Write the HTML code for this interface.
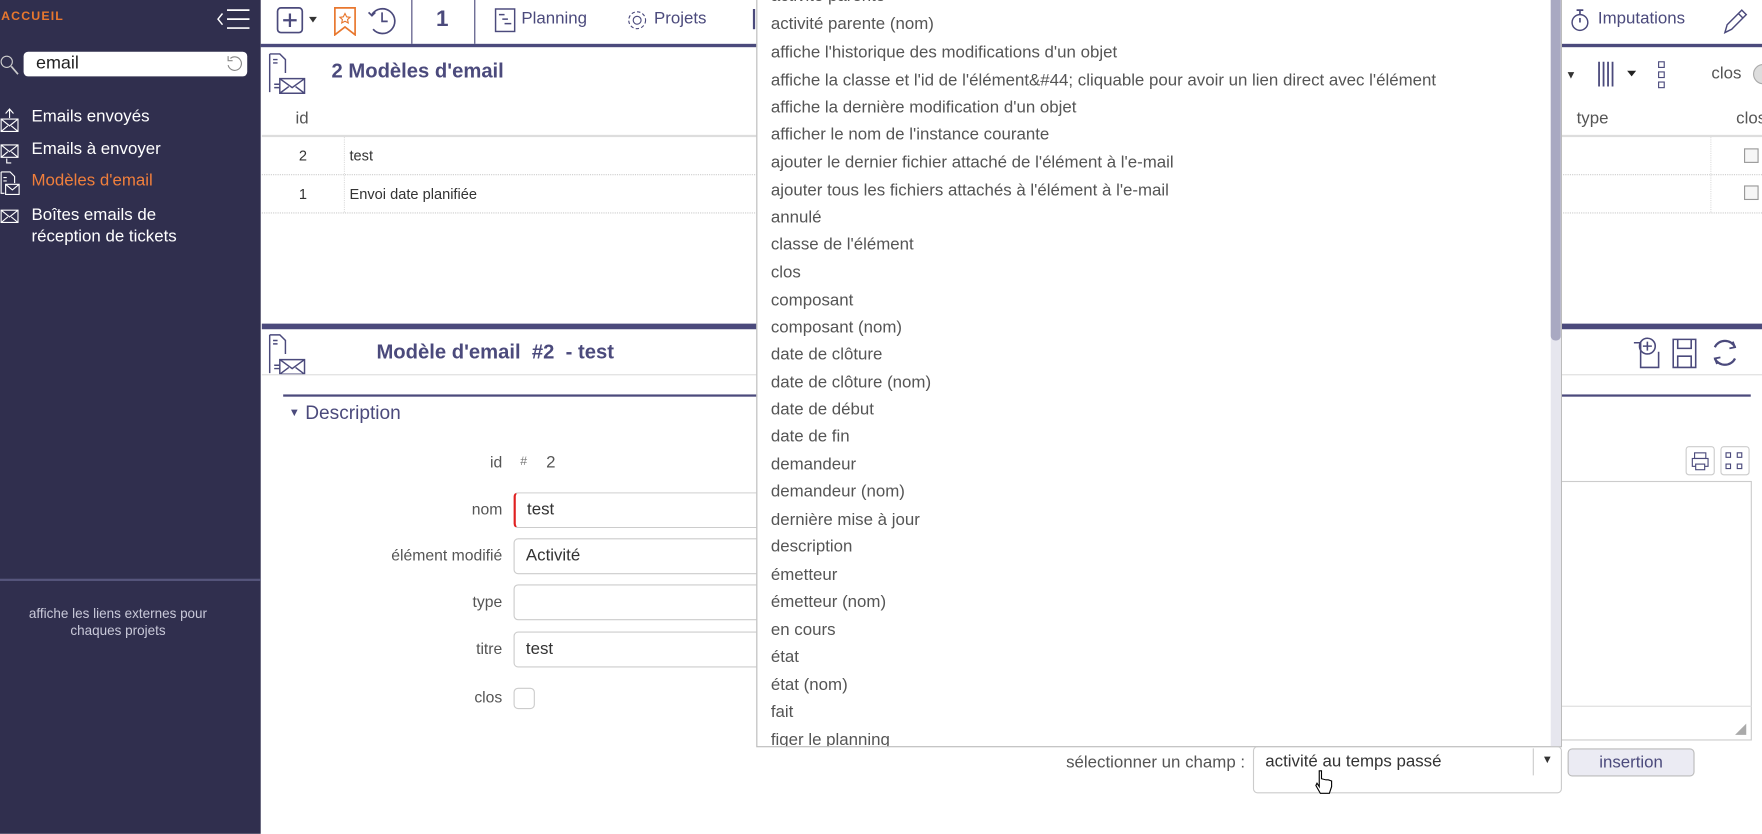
<!DOCTYPE html>
<html><head><meta charset="utf-8"><style>
*{box-sizing:border-box;margin:0;padding:0}
html,body{width:1762px;height:834px;overflow:hidden;background:#fff;font-family:"Liberation Sans",sans-serif}
#w{position:absolute;left:0;top:0;width:1568px;height:742px;transform:scale(1.12372);transform-origin:0 0;color:#333}
.a{position:absolute;white-space:nowrap}
#sb{position:absolute;left:0;top:0;width:232px;height:742px;background:#302f4e}
.mi{position:absolute;left:28px;color:#fff;font-size:15px}
.dd{position:absolute;left:673px;top:-17px;width:717px;height:682px;background:#fff;border:1px solid #bbb;overflow:hidden}
.dd div{position:absolute;left:12px;font-size:15px;color:#555}
.lab{position:absolute;right:1121px;font-size:14px;color:#555;text-align:right}
.inp{position:absolute;left:457px;width:240px;height:32px;border:1px solid #ccc;border-radius:4px;font-size:15px;padding:6px 10px;color:#333}
</style></head><body><div id="w">
<div id="sb">
<div class="a" style="left:1px;top:9px;color:#e8772e;font-size:11px;font-weight:bold;letter-spacing:1px">ACCUEIL</div>
<svg class="a" style="left:190px;top:6px" width="34" height="22" viewBox="0 0 34 22"><path d="M8 6 L4 11 L8 16" stroke="#fff" fill="none" stroke-width="1.3"/><path d="M12 3H32M12 11H32M12 19H32" stroke="#fff" stroke-width="1.5"/></svg>
<svg class="a" style="left:0;top:48px" width="18" height="20"><circle cx="6" cy="7" r="5" stroke="#ccc" fill="none"/><path d="M10 11L16 18" stroke="#ccc" stroke-width="1.5"/></svg>
<div class="a" style="left:21px;top:46px;width:199px;height:22px;background:#fff;border-radius:4px;font-size:16px;padding:2px 11px;color:#222">email</div>
<svg class="a" style="left:200px;top:49px" width="18" height="17"><path d="M5 3 A6 6 0 1 1 3 9" stroke="#888" fill="none"/><path d="M3 1v4h4" stroke="#888" fill="none"/></svg>
<svg class="a" style="left:0;top:96px" width="18" height="22"><path d="M1 10h15v11H1zM1 10l7.5 6 7.5-6M1 21l6-5M16 21l-6-5M8.5 1v8M5 5l3.5-4 3.5 4" stroke="#fff" fill="none"/></svg>
<div class="mi" style="top:95px">Emails envoyés</div>
<svg class="a" style="left:0;top:126px" width="18" height="22"><path d="M1 3h15v11H1zM1 3l7.5 6 7.5-6M1 14l6-5M16 14l-6-5M6 15v4h4" stroke="#fff" fill="none"/></svg>
<div class="mi" style="top:124px">Emails à envoyer</div>
<svg class="a" style="left:0;top:152px" width="18" height="22"><path d="M1 1h8l4 4v6M1 1v19h3M3 6h3M3 9h3M5 12h12v9H5zM5 12l6 5 6-5" stroke="#fff" fill="none"/></svg>
<div class="mi" style="top:152px;color:#f07f3c">Modèles d'email</div>
<svg class="a" style="left:0;top:185px" width="18" height="16"><path d="M1 2h15v11H1zM1 2l7.5 6 7.5-6M1 13l6-5M16 13l-6-5" stroke="#fff" fill="none"/></svg>
<div class="mi" style="top:182px;line-height:19px">Boîtes emails de<br>réception de tickets</div>
<div class="a" style="left:0;top:515px;width:232px;height:2px;background:#56557c"></div>
<div class="a" style="left:0;top:539px;width:210px;text-align:center;color:#c9c9d9;font-size:12px;line-height:15px;white-space:normal">affiche les liens externes pour<br>chaques projets</div>
</div>
<!-- top bar -->
<div class="a" style="left:232px;top:39px;width:1336px;height:3px;background:#4b4a7c"></div>
<svg class="a" style="left:245px;top:5px" width="45" height="28"><rect x="2" y="2" width="22" height="22" rx="3" stroke="#4b4a7c" fill="none" stroke-width="1.5"/><path d="M13 7v12M7 13h12" stroke="#4b4a7c" stroke-width="2"/><path d="M30 10h7l-3.5 5z" fill="#333"/></svg>
<svg class="a" style="left:295px;top:4px" width="26" height="28"><path d="M3 3h18v24l-9-7-9 7z" stroke="#e8772e" fill="none" stroke-width="1.5"/><path d="M12 8l1.5 3 3 .4-2.2 2 .6 3-2.9-1.5-2.9 1.5.6-3-2.2-2 3-.4z" stroke="#e8772e" fill="none"/></svg>
<svg class="a" style="left:326px;top:4px" width="28" height="28"><path d="M5 9 A11 11 0 1 1 6 22" stroke="#4b4a7c" fill="none" stroke-width="1.5"/><path d="M2 7l3 3 3-3M14 7v8h5" stroke="#4b4a7c" fill="none" stroke-width="1.5"/></svg>
<div class="a" style="left:366px;top:0;width:1px;height:39px;background:#4b4a7c"></div>
<div class="a" style="left:388px;top:6px;font-size:20px;font-weight:bold;color:#4b4a7c">1</div>
<div class="a" style="left:422px;top:0;width:1px;height:39px;background:#4b4a7c"></div>
<svg class="a" style="left:440px;top:7px" width="20" height="22"><rect x="1" y="1" width="17" height="20" stroke="#4b4a7c" fill="none" stroke-width="1.3"/><path d="M4 6h5M7 10h5M9 14h6" stroke="#4b4a7c" stroke-width="1.3"/></svg>
<div class="a" style="left:464px;top:8px;font-size:15px;color:#4b4a7c">Planning</div>
<svg class="a" style="left:557px;top:8px" width="20" height="20"><circle cx="10" cy="10" r="3.5" stroke="#4b4a7c" fill="none"/><circle cx="10" cy="10" r="7.5" stroke="#4b4a7c" fill="none" stroke-dasharray="3 2"/></svg>
<div class="a" style="left:582px;top:8px;font-size:15px;color:#4b4a7c">Projets</div>
<div class="a" style="left:670px;top:8px;width:2px;height:18px;background:#4b4a7c"></div>
<svg class="a" style="left:1397px;top:6px" width="18" height="24"><circle cx="9" cy="14" r="7" stroke="#4b4a7c" fill="none" stroke-width="1.3"/><path d="M6 3h6M9 3v4M9 14V10" stroke="#4b4a7c" stroke-width="1.5"/></svg>
<div class="a" style="left:1422px;top:8px;font-size:15px;color:#4b4a7c">Imputations</div>
<svg class="a" style="left:1532px;top:6px" width="24" height="26"><path d="M3 23l2-7 13-13 4 4-13 13z M15 6l4 4" stroke="#4b4a7c" fill="none" stroke-width="1.3"/></svg>
<!-- list panel -->
<svg class="a" style="left:238px;top:47px" width="36" height="38"><path d="M2 1h9l5 5v12M2 1v34M5 6h4M5 9h4M6 28h5M6 31h5" stroke="#4b4a7c" fill="none" stroke-width="1.3"/><path d="M11 23h22v13H11zM11 23l11 8 11-8M11 36l8-6M33 36l-8-6" stroke="#4b4a7c" fill="none" stroke-width="1.3"/></svg>
<div class="a" style="left:295px;top:53px;font-size:18px;font-weight:bold;color:#4b4a7c">2 Modèles d'email</div>
<div class="a" style="left:1393px;top:62px;width:16px;font-size:10px">▼</div>
<svg class="a" style="left:1420px;top:53px" width="40" height="28"><path d="M3 2v22M7 2v22M11 2v22M15 2v22" stroke="#4b4a7c" stroke-width="1.6"/><path d="M28 10h8l-4 5z" fill="#222"/></svg>
<svg class="a" style="left:1474px;top:54px" width="10" height="26"><rect x="2" y="1" width="5" height="5" stroke="#4b4a7c" fill="none"/><rect x="2" y="10" width="5" height="5" stroke="#4b4a7c" fill="none"/><rect x="2" y="19" width="5" height="5" stroke="#4b4a7c" fill="none"/></svg>
<div class="a" style="left:1523px;top:57px;font-size:15px;color:#555">clos</div>
<div class="a" style="left:1560px;top:57px;width:20px;height:18px;border-radius:9px;background:#ddd;border:1px solid #aaa"></div>
<div class="a" style="left:263px;top:97px;font-size:15px;color:#555">id</div>
<div class="a" style="left:1403px;top:97px;font-size:15px;color:#555">type</div>
<div class="a" style="left:1545px;top:97px;font-size:15px;color:#555">clos</div>
<div class="a" style="left:233px;top:120px;width:1335px;height:2px;background:#ddd"></div>
<div class="a" style="left:233px;top:155px;width:1335px;border-top:1px dotted #ccc"></div>
<div class="a" style="left:233px;top:189px;width:1335px;border-top:1px dotted #ccc"></div>
<div class="a" style="left:306px;top:122px;height:67px;border-left:1px dotted #ddd"></div>
<div class="a" style="left:1522px;top:122px;height:67px;border-left:1px dotted #ddd"></div>
<div class="a" style="left:266px;top:131px;font-size:13px">2</div>
<div class="a" style="left:311px;top:131px;font-size:13px">test</div>
<div class="a" style="left:266px;top:165px;font-size:13px">1</div>
<div class="a" style="left:311px;top:165px;font-size:13px">Envoi date planifiée</div>
<div class="a" style="left:1552px;top:132px;width:13px;height:13px;border:1px solid #999;background:#f6f6f6"></div>
<div class="a" style="left:1552px;top:165px;width:13px;height:13px;border:1px solid #999;background:#f6f6f6"></div>
<!-- detail -->
<div class="a" style="left:233px;top:288px;width:1335px;height:5px;background:#4b4a7c"></div>
<svg class="a" style="left:238px;top:297px" width="36" height="38"><path d="M2 1h9l5 5v12M2 1v34M5 6h4M5 9h4M6 28h5M6 31h5" stroke="#4b4a7c" fill="none" stroke-width="1.3"/><path d="M11 23h22v13H11zM11 23l11 8 11-8M11 36l8-6M33 36l-8-6" stroke="#4b4a7c" fill="none" stroke-width="1.3"/></svg>
<div class="a" style="left:335px;top:303px;font-size:18px;font-weight:bold;color:#4b4a7c;white-space:pre">Modèle d'email  #2  - test</div>
<svg class="a" style="left:1450px;top:299px" width="100" height="30"><path d="M4 6h6v22h16V14M10 6" stroke="#4b4a7c" fill="none" stroke-width="1.4"/><circle cx="16" cy="9" r="7" stroke="#4b4a7c" fill="none" stroke-width="1.4"/><path d="M16 5v8M12 9h8" stroke="#4b4a7c" stroke-width="1.4"/><path d="M39 3h20v25H39z M43 3v8h12V3 M43 18h12v10H43z" stroke="#4b4a7c" fill="none" stroke-width="1.4"/><path d="M76 10A10 10 0 0 1 94 10M94 20A10 10 0 0 1 76 20" stroke="#4b4a7c" fill="none" stroke-width="2"/><path d="M92 5l2 5-5 1M78 25l-2-5 5-1" stroke="#4b4a7c" fill="none" stroke-width="1.6"/></svg>
<div class="a" style="left:233px;top:333px;width:1335px;height:1px;background:#ddd"></div>
<div class="a" style="left:252px;top:351px;width:1306px;height:2px;background:#4b4a7c"></div>
<div class="a" style="left:257px;top:358px;font-size:17px;color:#4b4a7c"><span style="font-size:10px;vertical-align:3px">▼</span> Description</div>
<div class="lab" style="top:403px">id</div>
<div class="a" style="left:463px;top:405px;font-size:11px;color:#777">#</div>
<div class="a" style="left:486px;top:403px;font-size:15px;color:#555">2</div>
<div class="lab" style="top:445px">nom</div>
<div class="inp" style="top:438px;border-left:2px solid #e02020">test</div>
<div class="lab" style="top:486px">élément modifié</div>
<div class="inp" style="top:479px">Activité</div>
<div class="lab" style="top:527px">type</div>
<div class="inp" style="top:520px"></div>
<div class="lab" style="top:569px">titre</div>
<div class="inp" style="top:562px">test</div>
<div class="lab" style="top:612px">clos</div>
<div class="a" style="left:457px;top:612px;width:19px;height:19px;border:1px solid #ccc;border-radius:4px"></div>
<div class="a" style="left:1500px;top:397px;width:26px;height:26px;border:1px solid #ccc;border-radius:3px"></div>
<div class="a" style="left:1531px;top:397px;width:26px;height:26px;border:1px solid #ccc;border-radius:3px"></div>
<svg class="a" style="left:1503px;top:401px" width="52" height="20"><rect x="5" y="2" width="10" height="5" stroke="#4b4a7c" fill="none"/><rect x="3" y="7" width="14" height="7" stroke="#4b4a7c" fill="none"/><rect x="6" y="12" width="8" height="5" stroke="#4b4a7c" fill="#fff"/><path d="M33 2h4v4h-4zM43 2h4v4h-4zM33 12h4v4h-4zM43 12h4v4h-4z" stroke="#4b4a7c" fill="none"/></svg>
<div class="a" style="left:1389px;top:428px;width:170px;height:231px;border:1px solid #ccc"></div>
<div class="a" style="left:1389px;top:628px;width:170px;height:1px;background:#ddd"></div>
<svg class="a" style="left:1542px;top:642px" width="14" height="14"><path d="M12 2L2 12h10z" fill="#aaa"/></svg>
<!-- bottom -->
<div class="a" style="right:460px;top:670px;font-size:15px;color:#555">sélectionner un champ :</div>
<div class="a" style="left:1115px;top:664px;width:275px;height:42px;border:1px solid #ccc;border-radius:4px"></div>
<div class="a" style="left:1126px;top:669px;font-size:15px;color:#333">activité au temps passé</div>
<div class="a" style="left:1364px;top:666px;width:1px;height:24px;background:#ccc"></div>
<div class="a" style="left:1372px;top:671px;font-size:10px">▼</div>
<div class="a" style="left:1395px;top:666px;width:113px;height:25px;background:#ebebf3;border:1px solid #bbb;border-radius:4px;font-size:15px;text-align:center;line-height:23px;color:#4b4a7c">insertion</div>
<svg class="a" style="left:1170px;top:684px" width="16" height="24"><path d="M4 2v14l-2-3-1 2 4 7h8l2-6v-5l-3-1-2 0-4-1V2z" stroke="#000" fill="#fff"/></svg>
<!-- dropdown -->
<div class="dd">
<div style="top:4px">activité parente</div>
<div style="top:29px">activité parente (nom)</div>
<div style="top:54px">affiche l'historique des modifications d'un objet</div>
<div style="top:79px">affiche la classe et l'id de l'élément&amp;#44; cliquable pour avoir un lien direct avec l'élément</div>
<div style="top:103px">affiche la dernière modification d'un objet</div>
<div style="top:127px">afficher le nom de l'instance courante</div>
<div style="top:152px">ajouter le dernier fichier attaché de l'élément à l'e-mail</div>
<div style="top:177px">ajouter tous les fichiers attachés à l'élément à l'e-mail</div>
<div style="top:201px">annulé</div>
<div style="top:225px">classe de l'élément</div>
<div style="top:250px">clos</div>
<div style="top:275px">composant</div>
<div style="top:299px">composant (nom)</div>
<div style="top:323px">date de clôture</div>
<div style="top:348px">date de clôture (nom)</div>
<div style="top:372px">date de début</div>
<div style="top:396px">date de fin</div>
<div style="top:421px">demandeur</div>
<div style="top:445px">demandeur (nom)</div>
<div style="top:470px">dernière mise à jour</div>
<div style="top:494px">description</div>
<div style="top:519px">émetteur</div>
<div style="top:543px">émetteur (nom)</div>
<div style="top:568px">en cours</div>
<div style="top:592px">état</div>
<div style="top:617px">état (nom)</div>
<div style="top:641px">fait</div>
<div style="top:666px">figer le planning</div>
<span style="position:absolute;left:706px;top:0;width:9px;height:681px;background:#e6e6ee"></span>
<span style="position:absolute;left:706px;top:0;width:9px;height:319px;background:#a9a9c2;border-radius:4px"></span>
</div>
</div></body></html>
